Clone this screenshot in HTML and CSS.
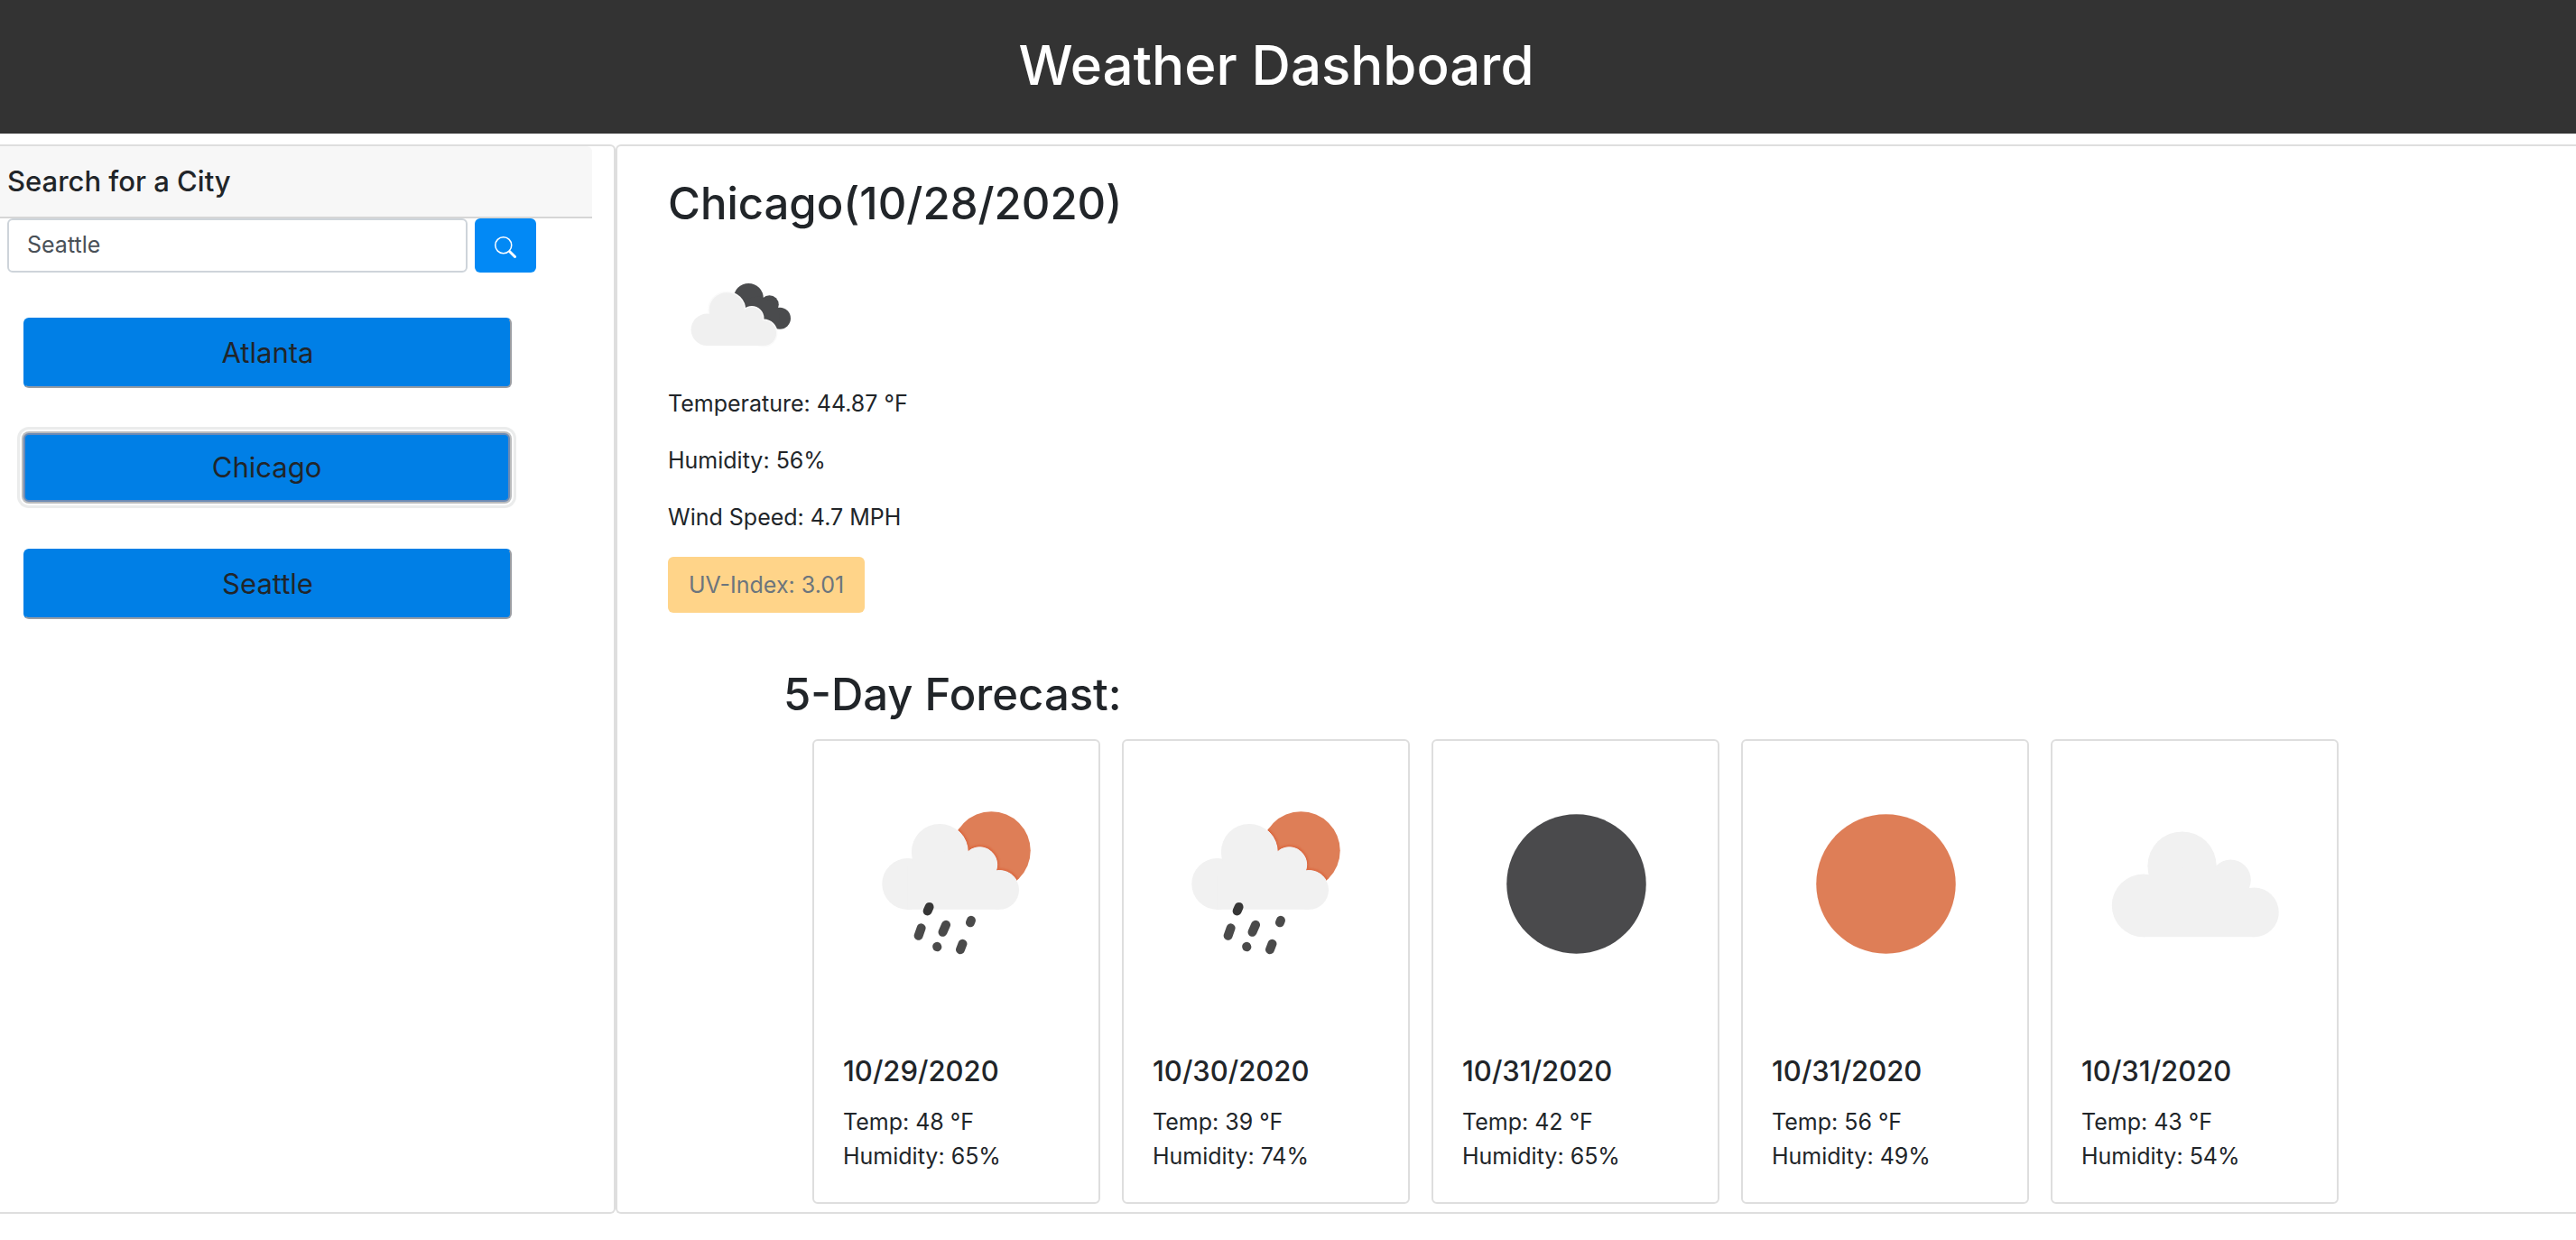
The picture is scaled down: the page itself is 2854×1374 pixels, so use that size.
FILE: index.html
```html
<!DOCTYPE html>
<html lang="en">
<head>
  <meta charset="utf-8">
  <meta name="viewport" content="width=device-width, initial-scale=1">
  <title>Weather Dashboard</title>
  <link rel="stylesheet" href="styles.css">
</head>
<body>
  <svg class="sprite" aria-hidden="true">
    <defs>
      <clipPath id="sun-clip"><circle cx="197" cy="122" r="43.5"/></clipPath>
      <filter id="soft"><feGaussianBlur stdDeviation="1.2"/></filter>
      <g id="rain-cloud">
        <circle cx="104" cy="159" r="28.5"/>
        <circle cx="139.5" cy="123.5" r="31.3"/>
        <circle cx="184" cy="137.5" r="19.3"/>
        <circle cx="206" cy="165.7" r="21.7"/>
        <path d="M104 187.4V140L130 120L184 130L206 150V187.4Z"/>
      </g>
      <symbol id="icon-rain" viewBox="0 0 316 316">
        <circle cx="197" cy="122" r="43.5" fill="#de7e57"/>
        <g clip-path="url(#sun-clip)">
          <use href="#rain-cloud" fill="#db6b42" stroke="#db6b42" stroke-width="5" filter="url(#soft)"/>
          <use href="#rain-cloud" fill="#eff5f9" stroke="#eff5f9" stroke-width="1"/>
        </g>
        <use href="#rain-cloud" fill="#f1f1f1"/>
        <g stroke="#4a4a4a" stroke-width="10" stroke-linecap="round" fill="none">
          <path stroke="#363636" d="M128 184.500L126 189"/>
          <path d="M119 208L116 216.500M146.500 204.500L143 212.500M174.500 199.500L173.500 202M136.600 228.500L136.800 229M165 225.500L162.500 232"/>
        </g>
      </symbol>
      <symbol id="icon-clouds" viewBox="0 0 160 160">
        <g fill="#4a4b4d">
          <circle cx="89.300" cy="62.500" r="16.600"/>
          <circle cx="112.500" cy="69.600" r="10.300"/>
          <circle cx="124" cy="84.700" r="12"/>
          <path d="M80 65L100 60L116 66L124 80L122 96L100 90Z"/>
        </g>
        <g fill="#f0f0f0" stroke="#fafafa" stroke-width="2">
          <circle cx="65.300" cy="75.700" r="20"/>
          <circle cx="93" cy="84.500" r="12.500"/>
          <circle cx="106" cy="101" r="14.500"/>
        </g>
        <g fill="#f0f0f0">
          <circle cx="43.300" cy="97.300" r="17.700"/>
          <circle cx="65.300" cy="75.700" r="19.500"/>
          <circle cx="93" cy="84.500" r="12"/>
          <circle cx="106" cy="101" r="14"/>
          <path d="M43.300 115V85L60 75L93 80L106 92V115Z"/>
        </g>
      </symbol>
      <symbol id="icon-night" viewBox="0 0 316 316">
        <circle cx="159" cy="159" r="77.500" fill="#4a4a4c"/>
      </symbol>
      <symbol id="icon-sun" viewBox="0 0 316 316">
        <circle cx="159" cy="159" r="77.500" fill="#de7e57"/>
      </symbol>
      <symbol id="icon-cloud" viewBox="0 0 316 316">
        <g fill="#f1f1f1">
          <circle cx="101" cy="183" r="35"/>
          <circle cx="144" cy="139" r="38.300"/>
          <circle cx="198" cy="154.500" r="22.500"/>
          <circle cx="224" cy="190.500" r="27.500"/>
          <path d="M101 218V160L130 140L198 145L224 170V218Z"/>
        </g>
      </symbol>
    </defs>
  </svg>

  <header class="navbar">
    <h1 class="navbar-title">Weather Dashboard</h1>
  </header>

  <main class="layout">
    <aside class="panel sidebar">
      <h2 class="sidebar-header"><label for="city">Search for a City</label></h2>
      <form class="search">
        <input class="search-input" id="city" type="text" value="Seattle">
        <button class="search-button" type="button" aria-label="Search">
          <svg class="search-icon" viewBox="0 0 16 16" fill="currentColor" aria-hidden="true">
            <path fill-rule="evenodd" d="M10.442 10.442a1 1 0 0 1 1.415 0l3.850 3.850a1 1 0 0 1-1.414 1.415l-3.850-3.850a1 1 0 0 1 0-1.415z"/>
            <path fill-rule="evenodd" d="M6.500 12a5.500 5.500 0 1 0 0-11 5.500 5.500 0 0 0 0 11zM13 6.500a6.500 6.500 0 1 1-13 0 6.500 6.500 0 0 1 13 0z"/>
          </svg>
        </button>
      </form>
      <div class="history">
        <button class="city" type="button">Atlanta</button>
        <button class="city city-active" type="button">Chicago</button>
        <button class="city" type="button">Seattle</button>
      </div>
    </aside>

    <section class="panel content">
      <div class="current">
        <h2 class="heading">Chicago(10/28/2020)</h2>
        <svg class="current-icon" role="img" aria-label="Broken clouds"><use href="#icon-clouds"/></svg>
        <p class="reading">Temperature: 44.87 °F</p>
        <p class="reading">Humidity: 56%</p>
        <p class="reading">Wind Speed: 4.7 MPH</p>
        <button class="uv" type="button" disabled>UV-Index: 3.01</button>
      </div>

      <div class="forecast">
        <h2 class="heading forecast-heading">5-Day Forecast:</h2>
        <div class="cards">
          <article class="card">
            <svg class="card-icon" viewBox="0 0 316 316" role="img" aria-label="Rain"><use href="#icon-rain"/></svg>
            <div class="card-body">
              <h3 class="card-date">10/29/2020</h3>
              <p class="card-text">Temp: 48 °F</p>
              <p class="card-text">Humidity: 65%</p>
            </div>
          </article>
          <article class="card">
            <svg class="card-icon" viewBox="0 0 316 316" role="img" aria-label="Rain"><use href="#icon-rain"/></svg>
            <div class="card-body">
              <h3 class="card-date">10/30/2020</h3>
              <p class="card-text">Temp: 39 °F</p>
              <p class="card-text">Humidity: 74%</p>
            </div>
          </article>
          <article class="card">
            <svg class="card-icon" viewBox="0 0 316 316" role="img" aria-label="Clear night"><use href="#icon-night"/></svg>
            <div class="card-body">
              <h3 class="card-date">10/31/2020</h3>
              <p class="card-text">Temp: 42 °F</p>
              <p class="card-text">Humidity: 65%</p>
            </div>
          </article>
          <article class="card">
            <svg class="card-icon" viewBox="0 0 316 316" role="img" aria-label="Clear sky"><use href="#icon-sun"/></svg>
            <div class="card-body">
              <h3 class="card-date">10/31/2020</h3>
              <p class="card-text">Temp: 56 °F</p>
              <p class="card-text">Humidity: 49%</p>
            </div>
          </article>
          <article class="card">
            <svg class="card-icon" viewBox="0 0 316 316" role="img" aria-label="Scattered clouds"><use href="#icon-cloud"/></svg>
            <div class="card-body">
              <h3 class="card-date">10/31/2020</h3>
              <p class="card-text">Temp: 43 °F</p>
              <p class="card-text">Humidity: 54%</p>
            </div>
          </article>
        </div>
      </div>
    </section>
  </main>
</body>
</html>
```
FILE: styles.css
```css
*,
*::before,
*::after {
  box-sizing: border-box;
}

body {
  margin: 0;
  background: #fff;
  color: #212529;
  font-family: Inter, "Liberation Sans", sans-serif;
  font-size: 25px;
  line-height: 38px;
}

h1,
h2,
h3,
p {
  margin: 0;
}

button,
input {
  font: inherit;
}

.sprite {
  display: block;
  width: 0;
  height: 0;
}

.navbar {
  padding: 32px 26px 36px 0;
  background: #333;
  color: #fff;
  text-align: center;
}

.navbar-title {
  font-size: 60px;
  font-weight: 500;
  line-height: 80px;
}

.layout {
  display: grid;
  grid-template-columns: minmax(0, 682fr) minmax(0, 2172fr);
  margin-top: 12px;
}

.panel {
  border: 2px solid #dedede;
  border-radius: 6px;
}

.sidebar {
  border-left: 0;
  border-top-left-radius: 0;
  border-bottom-left-radius: 0;
}

.sidebar-header {
  margin-right: 24px;
  padding: 20px 8px;
  border-bottom: 2px solid #d6d6d6;
  border-top-right-radius: 6px;
  background: #f7f7f7;
  font-size: 31px;
  font-weight: 500;
  line-height: 38px;
}

.search {
  display: flex;
  gap: 8px;
  margin-right: 86px;
  padding-left: 8px;
}

.search-input {
  flex: 1;
  min-width: 0;
  height: 60px;
  padding: 0 20px 2px;
  border: 2px solid #ced4da;
  border-radius: 6px;
  background: #fff;
  color: #495057;
}

.search-button {
  display: grid;
  place-items: center;
  width: 68px;
  height: 60px;
  padding: 4px 0 0;
  border: 0;
  border-radius: 6px;
  background: #0289f5;
  color: #fff;
}

.search-icon {
  width: 24px;
  height: 24px;
}

.history {
  display: grid;
  gap: 50px;
  margin: 50px 113px 0 26px;
}

.city {
  height: 78px;
  padding: 0;
  border: 2px solid #007fe6;
  border-right-color: #9a9da3;
  border-bottom-color: #9a9da3;
  border-radius: 6px;
  background: #007fe6;
  color: #212529;
  font-size: 31px;
}

.city-active {
  height: 76px;
  margin: 0 2px 2px 0;
  border-color: #6b8ab5;
  box-shadow: 0 0 0 2px #b9bbbd, 0 0 0 4px #fff, 0 0 0 7px #ebecec;
}

.content {
  padding: 33px 0 9px 56px;
  border-right: 0;
  border-top-right-radius: 0;
  border-bottom-right-radius: 0;
}

.heading {
  font-size: 49px;
  font-weight: 500;
  line-height: 62px;
}

.current {
  display: flex;
  flex-direction: column;
  align-items: flex-start;
}

.current-icon {
  width: 160px;
  height: 160px;
  margin-top: 11px;
}

.reading {
  margin-bottom: 25px;
}

.uv {
  padding: 12px 23px;
  border: 0;
  border-radius: 6px;
  background: #ffd489;
  color: #6c757d;
}

.forecast {
  margin: 60px 263px 0 128px;
}

.forecast-heading {
  margin-bottom: 18px;
}

.cards {
  display: grid;
  grid-template-columns: repeat(5, minmax(0, 1fr));
  gap: 24px;
  margin-left: 32px;
}

.card {
  border: 2px solid #dedede;
  border-radius: 6px;
}

.card-icon {
  display: block;
  width: 100%;
}

.card-body {
  padding: 32px;
}

.card-date {
  margin-bottom: 18px;
  font-size: 31px;
  font-weight: 500;
  line-height: 38px;
}
```
